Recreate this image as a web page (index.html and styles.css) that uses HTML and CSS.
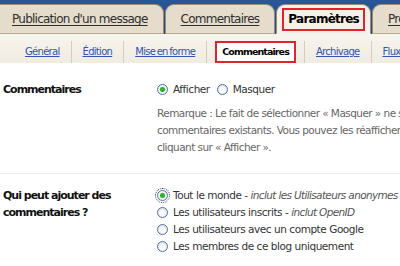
FILE: index.html
```html
<!DOCTYPE html>
<html lang="fr">
<head>
<meta charset="utf-8">
<title>Paramètres - Commentaires</title>
<link rel="stylesheet" href="styles.css">
</head>
<body>
<div class="page">
  <nav class="tabs">
    <a class="tab first" href="#">Publication d'un message</a>
    <a class="tab" href="#">Commentaires</a>
    <a class="tab active" href="#"><span class="mark">Paramètres</span></a>
    <a class="tab" href="#">Présentation</a>
  </nav>
  <nav class="subtabs">
    <a class="sub first" href="#">Général</a>
    <a class="sub" href="#">Édition</a>
    <a class="sub" href="#">Mise en forme</a>
    <span class="sub active"><span class="mark">Commentaires</span></span>
    <a class="sub" href="#">Archivage</a>
    <a class="sub" href="#">Flux du site</a>
  </nav>
  <div class="content">
    <div class="row">
      <div class="label">Commentaires</div>
      <div class="field">
        <div class="inline-opts">
          <label class="opt"><span class="radio checked"></span>Afficher</label>
          <label class="opt"><span class="radio"></span>Masquer</label>
        </div>
        <p class="note">Remarque : Le fait de sélectionner « Masquer » ne supprime pas les<br>commentaires existants. Vous pouvez les réafficher à tout moment en<br>cliquant sur « Afficher ».</p>
      </div>
    </div>
    <div class="row">
      <div class="label">Qui peut ajouter des commentaires ?</div>
      <div class="field">
        <label class="opt"><span class="radio checked focus"></span>Tout le monde -&nbsp;<em>inclut les Utilisateurs anonymes</em></label>
        <label class="opt"><span class="radio"></span>Les utilisateurs inscrits -&nbsp;<em>inclut OpenID</em></label>
        <label class="opt"><span class="radio"></span>Les utilisateurs avec un compte Google</label>
        <label class="opt"><span class="radio"></span>Les membres de ce blog uniquement</label>
      </div>
    </div>
  </div>
</div>
</body>
</html>
```
FILE: styles.css
```css
html, body {
  margin: 0;
  padding: 0;
  background: #fff;
}
body {
  font-family: "DejaVu Sans", Verdana, sans-serif;
  width: 400px;
  height: 266px;
  overflow: hidden;
}
.page {
  width: 400px;
  overflow: hidden;
}
.tabs {
  display: flex;
  align-items: flex-end;
  background: linear-gradient(#2a5798, #1a4586);
  padding-top: 4px;
  white-space: nowrap;
}
.tab {
  flex: none;
  display: block;
  height: 28px;
  line-height: 28px;
  padding: 0 15px;
  margin-right: 1px;
  background: #e6dccb;
  border: 1px solid #9b8c72;
  border-bottom: 1px solid #b9ab92;
  border-radius: 9px 9px 0 0;
  color: #2e2e2e;
  font-size: 12px;
  letter-spacing: -0.75px;
  text-decoration: underline;
  text-underline-offset: 2px;
}
.tab.first {
  padding-left: 12px;
  padding-right: 15px;
  border-left: none;
  border-top-left-radius: 0;
}
.tab.active {
  background: #f5f1e9;
  border-bottom-color: #f5f1e9;
  text-decoration: none;
  color: #000;
  font-weight: bold;
  padding: 0 5px;
  display: flex;
  align-items: center;
}
.tab.active .mark {
  display: block;
  line-height: 19px;
  padding: 0 4px;
  border: 2px solid #e0242b;
}
.subtabs {
  display: flex;
  align-items: flex-end;
  background: linear-gradient(#f7f4ee, #f1ece2);
  height: 29px;
  padding-left: 14px;
  white-space: nowrap;
}
.sub {
  flex: none;
  display: block;
  height: 22px;
  line-height: 22px;
  padding: 0 11px;
  border-left: 1px solid #d5ccbb;
  color: #2f55b0;
  font-size: 10px;
  letter-spacing: -0.7px;
  word-spacing: -1px;
  text-decoration: underline;
}
.sub.first {
  border-left: none;
}
.sub.active {
  padding: 0 8px;
  color: #000;
  font-weight: bold;
  font-size: 9.5px;
  letter-spacing: -0.9px;
  text-decoration: none;
}
.sub.active .mark {
  display: block;
  height: 18px;
  line-height: 18px;
  padding: 0 5px;
  background: #fff;
  border: 2px solid #e0242b;
}
.content {
  padding-top: 5px;
  font-size: 10.5px;
  letter-spacing: -0.45px;
}
.row {
  display: flex;
  padding: 13px 0 17px;
  border-bottom: 1px solid #ebebeb;
}
.label {
  flex: none;
  width: 130px;
  padding-left: 3px;
  margin-right: 24px;
  font-weight: bold;
  font-size: 11px;
  letter-spacing: -1px;
  line-height: 17px;
  color: #111;
}
.field {
  flex: 1;
  min-width: 0;
  white-space: nowrap;
  line-height: 17px;
  color: #333;
}
.inline-opts {
  display: flex;
  gap: 7px;
}
.opt {
  display: flex;
  align-items: center;
}
.opt em {
  color: #555;
  letter-spacing: -0.65px;
}
.radio {
  flex: none;
  box-sizing: border-box;
  width: 11px;
  height: 11px;
  margin-right: 5px;
  border-radius: 50%;
  border: 1px solid #4f74a6;
  background: radial-gradient(circle at 50% 60%, #ffffff 0 2px, #dfe3ea 5px);
}
.radio.checked {
  background: radial-gradient(circle, #2fae2f 0 2px, #8ed48e 2.6px, #ffffff 3.2px, #e3e6ec 5px);
}
.radio.focus {
  outline: 1px dotted #333;
  outline-offset: 1px;
}
.note {
  margin: 7px 0 0;
  color: #666;
  letter-spacing: -0.55px;
  line-height: 17px;
}
```
